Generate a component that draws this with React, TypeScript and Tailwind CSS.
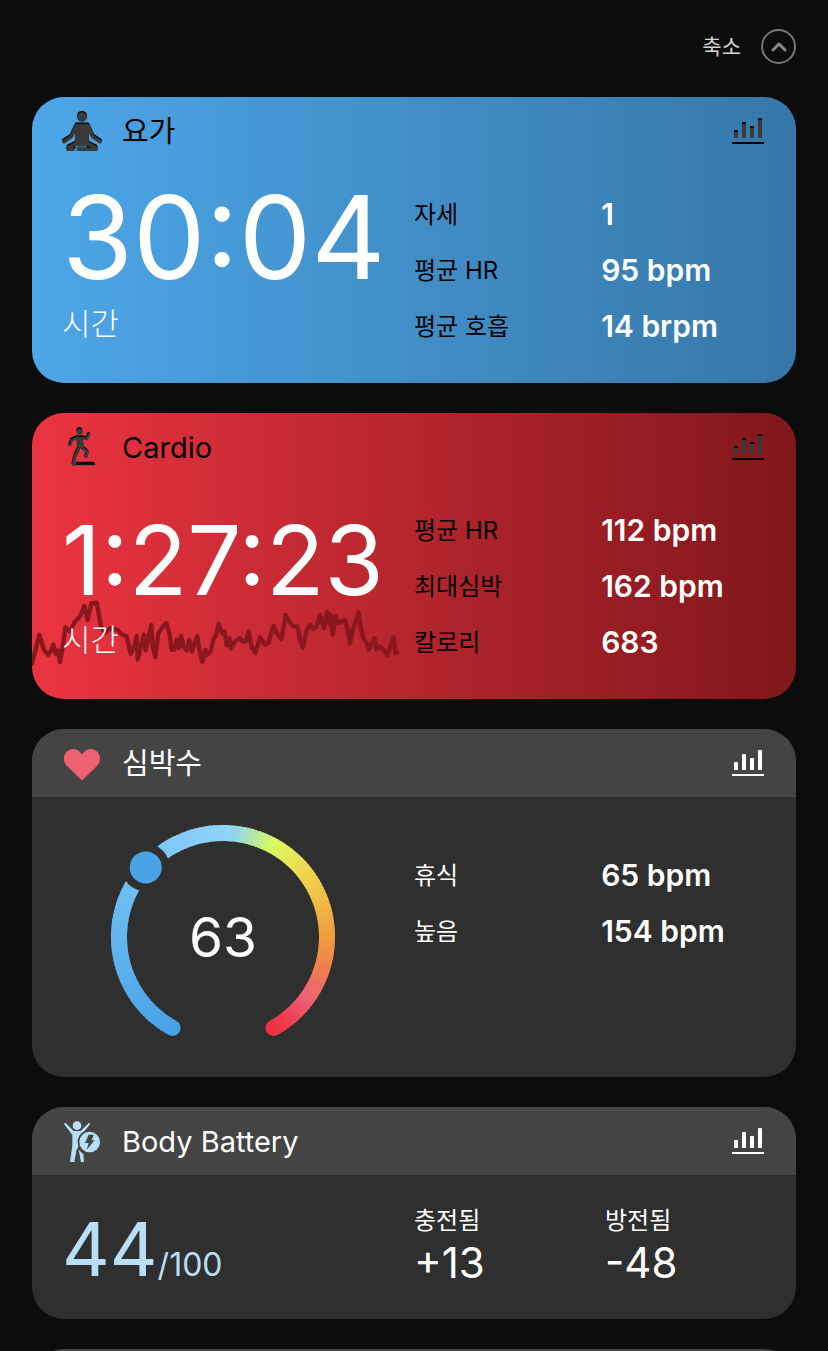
import React from 'react';
import { ChevronUp } from 'lucide-react';

type Stat = { label: string; value: string };

const yogaStats: Stat[] = [
  { label: '자세', value: '1' },
  { label: '평균 HR', value: '95 bpm' },
  { label: '평균 호흡', value: '14 brpm' },
];

const cardioStats: Stat[] = [
  { label: '평균 HR', value: '112 bpm' },
  { label: '최대심박', value: '162 bpm' },
  { label: '칼로리', value: '683' },
];

const heartStats: Stat[] = [
  { label: '휴식', value: '65 bpm' },
  { label: '높음', value: '154 bpm' },
];

const HEART_TRACE =
  '0,222 22,135 36,180 48,195 56,185 64,165 72,192 78,182 84,217 94,160 100,112 114,125 129,95 144,80 157,48 167,90 178,40 194,38 207,110 219,130 234,115 256,120 269,133 284,140 296,192 307,170 314,138 317,210 329,160 336,135 341,182 358,105 362,170 370,203 379,130 394,108 403,100 412,130 419,180 426,180 434,150 440,175 447,138 455,170 464,182 472,150 480,185 488,160 496,140 504,190 511,217 520,180 526,195 536,185 544,150 552,135 560,102 570,130 578,125 584,167 592,145 596,176 609,155 624,145 632,155 641,155 650,125 658,170 670,190 684,142 699,165 709,160 717,130 724,108 734,130 748,148 756,105 761,75 772,95 784,110 796,110 804,150 812,175 824,120 834,105 844,118 854,110 864,75 876,115 885,65 891,100 896,75 902,135 910,78 919,100 929,95 939,90 946,115 954,160 962,120 971,95 980,68 986,115 994,145 1004,160 1010,180 1018,165 1027,145 1034,180 1044,170 1054,180 1066,197 1075,170 1085,142 1090,190 1096,188';

const GAUGE_STOPS: [number, number[]][] = [
  [-151, [73, 162, 230]],
  [-60, [112, 191, 242]],
  [0, [143, 210, 251]],
  [6, [143, 213, 235]],
  [28, [219, 250, 96]],
  [56, [241, 208, 78]],
  [90, [240, 156, 62]],
  [108, [238, 126, 80]],
  [127, [236, 96, 120]],
  [142, [238, 62, 80]],
  [151, [236, 50, 66]],
];

const GAUGE_R = 104;
const GAUGE_END = 151;

function gaugeColor(deg: number) {
  let i = 1;
  while (i < GAUGE_STOPS.length - 1 && GAUGE_STOPS[i][0] < deg) i++;
  const [a, from] = GAUGE_STOPS[i - 1];
  const [b, to] = GAUGE_STOPS[i];
  const t = Math.min(1, Math.max(0, (deg - a) / (b - a)));
  return `rgb(${from.map((c, k) => Math.round(c + (to[k] - c) * t)).join(',')})`;
}

function gaugePoint(deg: number) {
  const rad = (deg * Math.PI) / 180;
  return [112 + GAUGE_R * Math.sin(rad), 112 - GAUGE_R * Math.cos(rad)];
}

function HeartGauge({ value }: { value: number }) {
  const arcs: React.ReactNode[] = [];
  for (let d = -GAUGE_END; d < GAUGE_END; d += 2) {
    const [x1, y1] = gaugePoint(d);
    const [x2, y2] = gaugePoint(Math.min(GAUGE_END, d + 3));
    arcs.push(
      <path
        key={d}
        d={`M${x1} ${y1}A${GAUGE_R} ${GAUGE_R} 0 0 1 ${x2} ${y2}`}
        stroke={gaugeColor(d + 1)}
        strokeWidth="16"
        fill="none"
      />
    );
  }
  const [sx, sy] = gaugePoint(-GAUGE_END);
  const [ex, ey] = gaugePoint(GAUGE_END);
  const [mx, my] = gaugePoint(-48);

  return (
    <div className="relative">
      <svg width="224" height="224" viewBox="0 0 224 224" aria-hidden="true">
        <circle cx={sx} cy={sy} r="8" fill={gaugeColor(-GAUGE_END)} />
        <circle cx={ex} cy={ey} r="8" fill={gaugeColor(GAUGE_END)} />
        {arcs}
        <circle cx={mx} cy={my} r="24" fill="#2f2f2f" />
        <circle cx={mx} cy={my} r="16" fill="#4aa3e6" />
      </svg>
      <span className="absolute inset-0 flex items-center justify-center text-[55px]">{value}</span>
    </div>
  );
}

function ChartButton({ dark = false }: { dark?: boolean }) {
  const bars = [
    [2, 12],
    [10, 4],
    [18, 8],
    [26, 0],
  ];
  return (
    <button type="button" aria-label="차트" className="ml-auto">
      <svg width="32" height="26" viewBox="0 0 32 26">
        {bars.map(([x, y]) => (
          <g key={x}>
            <path d={`M${x} 20V${y + 1}q0-1 1-1h2q1 0 1 1V20z`} fill={dark ? '#000' : '#fff'} />
            {dark && <path d={`M${x} 20V${y + 3}q0-1 1-1h2q1 0 1 1V20z`} fill="#3a3a3a" />}
          </g>
        ))}
        <path d="M0 24h32v2H0z" fill={dark ? '#000' : '#fff'} />
      </svg>
    </button>
  );
}

function YogaShape() {
  return (
    <g fill="currentColor" stroke="currentColor" strokeLinecap="round" strokeLinejoin="round">
      <circle cx="61" cy="14" r="15" stroke="none" />
      <path d="M44 36h34l2 10v54H42V46z" strokeWidth="3" />
      <path d="M44 40L29 73 6 89M78 40l15 33 23 16" strokeWidth="11" fill="none" />
      <path d="M41 96L20 107M81 96l21 11" strokeWidth="12" fill="none" />
      <path d="M18 112h20M50 112h54" strokeWidth="11" fill="none" />
    </g>
  );
}

function YogaIcon() {
  return (
    <svg width="40" height="41" viewBox="0 0 122 124" aria-hidden="true">
      <g className="text-black">
        <YogaShape />
      </g>
      <g className="text-[#3a3a3a]" transform="translate(0 4)">
        <YogaShape />
      </g>
      <path d="M40 123v-7q1-7 9-7h27" stroke="#4ba1e0" strokeWidth="3" fill="none" />
    </svg>
  );
}

function RunnerShape() {
  return (
    <>
      <circle cx="34" cy="10" r="9" fill="currentColor" stroke="none" />
      <path d="M27 29L39 28 45 56 30 60z" fill="currentColor" strokeWidth="5" />
      <path d="M27 28L10 36 5 51" />
      <path d="M40 29L55 32 62 19" />
      <path d="M43 60L57 71 53 86" strokeWidth="9" />
      <path d="M31 62L21 83 15 109" strokeWidth="9" />
    </>
  );
}

function CardioIcon() {
  return (
    <svg width="28" height="40" viewBox="0 0 84 120" aria-hidden="true" fill="none" strokeWidth="8" strokeLinecap="round" strokeLinejoin="round">
      <g className="text-black" stroke="currentColor">
        <RunnerShape />
      </g>
      <g className="text-[#3a3a3a]" stroke="currentColor" transform="translate(1 4)">
        <RunnerShape />
      </g>
      <path d="M25 104h53l4 10H21z" fill="#000" />
      <path d="M21 113h61v3H20z" fill="#555" />
    </svg>
  );
}

function HeartIcon() {
  return (
    <svg width="36" height="32" viewBox="0 0 36 32" aria-hidden="true">
      <path d="M18 31.500L2.500 16.500C-1 12.500-.8 6.500 2.500 3 6.500-1 12.500-1 16 3l2 2.500L20 3c3.500-4 9.500-4 13.500 0 3.300 3.500 3.500 9.500 0 13.500z" fill="#ee6173" />
    </svg>
  );
}

function BodyBatteryIcon() {
  return (
    <svg width="38" height="41" viewBox="0 0 114 123" aria-hidden="true">
      <g fill="#b9dff7">
        <circle cx="39" cy="14" r="13" />
        <path d="M0 9L4 5 29 30h21L75 5l4 4-25 30-7 30-10 20-6 34H18l7-50V42z" />
      </g>
      <circle cx="77" cy="63" r="36" fill="#444" />
      <path d="M44 86l14 14 2 23h-9z" fill="#b9dff7" />
      <circle cx="77" cy="63" r="31" fill="#b9dff7" />
      <path d="M74 41h15l-6 17h9L68 86l6-20H63z" fill="#444" />
    </svg>
  );
}

type CardHeaderProps = {
  icon: React.ReactNode;
  title: string;
  dark?: boolean;
};

function CardHeader({ icon, title, dark = false }: CardHeaderProps) {
  return (
    <header className={`flex h-[68px] items-center pr-8 pl-[30px] ${dark ? 'text-black' : 'bg-[#444444] text-white'}`}>
      <div className="flex w-[60px] shrink-0 items-center">{icon}</div>
      <h2 className="pt-[2px] text-[29px] leading-10">{title}</h2>
      <ChartButton dark={dark} />
    </header>
  );
}

function StatList({ stats, dark = false }: { stats: Stat[]; dark?: boolean }) {
  return (
    <dl>
      {stats.map((stat) => (
        <div key={stat.label} className="flex h-14 items-center">
          <dt className={`w-[49%] pt-[2px] text-2xl ${dark ? 'text-black' : 'text-white'}`}>{stat.label}</dt>
          <dd className="text-[30px] font-semibold whitespace-nowrap">{stat.value}</dd>
        </div>
      ))}
    </dl>
  );
}

export default function App() {
  return (
    <div className="h-screen overflow-hidden bg-[#0c0c0c] px-8 font-['Inter','Noto_Sans_CJK_KR',sans-serif] text-white">
      <div className="flex h-[97px] items-center justify-end pb-1">
        <button type="button" className="flex items-center gap-5 text-[21px] text-[#d4d4d4]">
          축소
          <span className="flex size-[35px] items-center justify-center rounded-full border-2 border-[#777777]">
            <ChevronUp className="size-6 text-[#888888]" strokeWidth={3} />
          </span>
        </button>
      </div>

      <main className="flex flex-col gap-[30px]">
        <section className="overflow-hidden rounded-[32px] bg-linear-to-r from-[#4da6e8] to-[#3677a8]">
          <CardHeader icon={<YogaIcon />} title="요가" dark />
          <div className="flex pt-[21px] pb-[29px]">
            <div className="w-1/2 pl-[30px]">
              <p className="pt-1 text-[115px] leading-[96px]">30:04</p>
              <p className="mt-[18px] text-[31px] leading-10 font-light">시간</p>
            </div>
            <div className="w-1/2">
              <StatList stats={yogaStats} dark />
            </div>
          </div>
        </section>

        <section className="relative overflow-hidden rounded-[32px] bg-linear-to-r from-[#ec3441] to-[#80171b]">
          {/* heart rate trace behind the time */}
          <svg className="absolute bottom-[26px] left-0 h-[83px] w-[48%]" viewBox="0 0 1100 250" preserveAspectRatio="none" aria-hidden="true">
            <polyline points={HEART_TRACE} fill="none" stroke="#8a171d" strokeWidth="13" strokeLinejoin="round" strokeLinecap="round" />
          </svg>
          <div className="relative">
            <CardHeader icon={<div className="pl-[6px]"><CardioIcon /></div>} title="Cardio" dark />
            <div className="flex pt-[21px] pb-[29px]">
              <div className="w-1/2 pl-[30px]">
                <p className="pt-4 text-[96px] leading-[84px]">1:27:23</p>
                <p className="mt-[18px] text-[31px] leading-10 font-light">시간</p>
              </div>
              <div className="w-1/2">
                <StatList stats={cardioStats} dark />
              </div>
            </div>
          </div>
        </section>

        <section className="overflow-hidden rounded-[32px] bg-[#2f2f2f]">
          <CardHeader icon={<div className="pt-[3px] pl-[2px]"><HeartIcon /></div>} title="심박수" />
          <div className="flex pt-7 pb-7">
            <div className="flex w-1/2 justify-center">
              <HeartGauge value={63} />
            </div>
            <div className="w-1/2 pt-[22px]">
              <StatList stats={heartStats} />
            </div>
          </div>
        </section>

        <section className="overflow-hidden rounded-[32px] bg-[#2f2f2f]">
          <CardHeader icon={<div className="pl-[2px]"><BodyBatteryIcon /></div>} title="Body Battery" />
          <div className="flex pt-7 pb-7">
            <p className="flex w-1/2 items-baseline pt-1 pl-[30px] text-[#b9dff7]">
              <span className="text-[74px] leading-[84px]">44</span>
              <span className="text-[32px]">/100</span>
            </p>
            <dl className="flex w-1/2">
              <div className="w-1/2">
                <dt className="text-2xl leading-9">충전됨</dt>
                <dd className="text-[42px] leading-12">+13</dd>
              </div>
              <div className="w-1/2">
                <dt className="text-2xl leading-9">방전됨</dt>
                <dd className="text-[42px] leading-12">-48</dd>
              </div>
            </dl>
          </div>
        </section>

        <section className="h-[68px] rounded-t-[32px] bg-[#444444]" />
      </main>
    </div>
  );
}
